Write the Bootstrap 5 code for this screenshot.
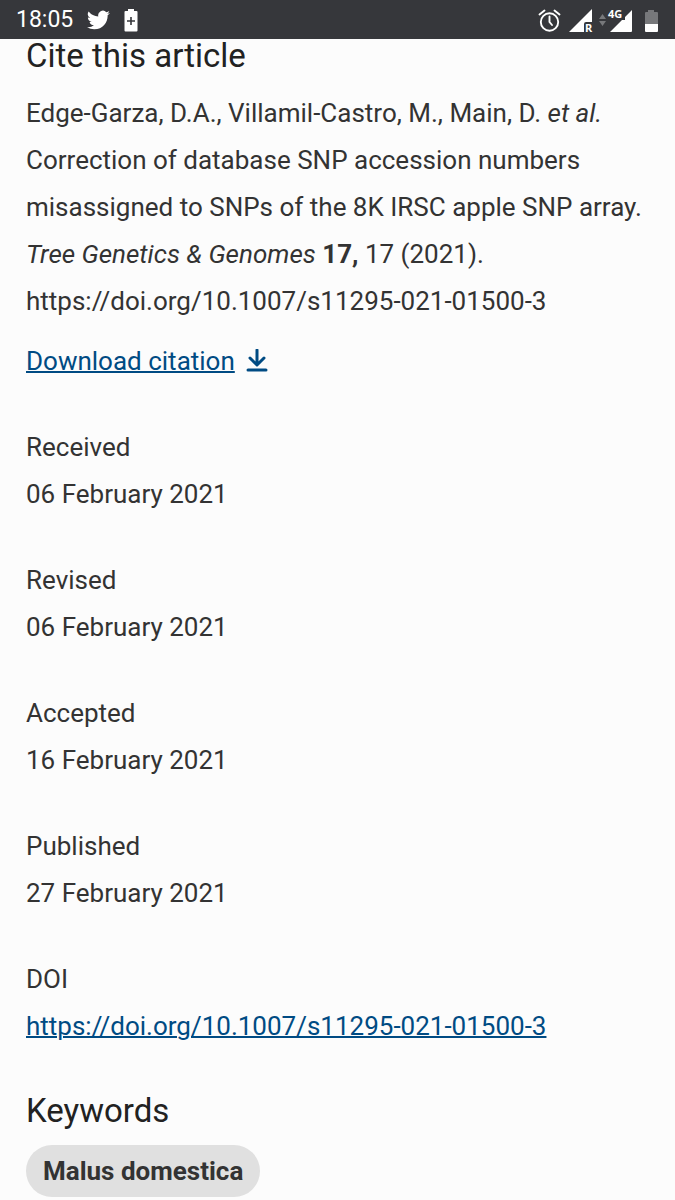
<!DOCTYPE html>
<html lang="en">
<head>
<meta charset="utf-8">
<meta name="viewport" content="width=device-width, initial-scale=1">
<title>Cite this article</title>
<link rel="stylesheet" href="https://cdn.jsdelivr.net/npm/bootstrap@5.3.0/dist/css/bootstrap.min.css">
<style>
  body { font-family: Roboto, "Liberation Sans", sans-serif; font-size: 26px; line-height: 47px; color: #333; background: #fcfcfc; }
  .status-bar { height: 39px; padding: 0 16px; background: #36373b; color: #fff; font-size: 23px; line-height: 39px; }
  .status-bar svg { display: block; }
  .status-icon { margin-left: 14px; }
  .article-info { padding: 0 24px 2px 26px; }
  .section-title { font-size: 33px; line-height: 34px; font-weight: 400; color: #222; margin-bottom: 17px; }
  .citation { margin-bottom: 13px; }
  .article-info a { color: #004b83; text-decoration-thickness: 2px; }
  .download { margin-bottom: 39px; }
  .history > div { margin-bottom: 39px; }
  .history > div:last-child { margin-bottom: 44px; }
  .history dt { font-weight: 400; }
  .keyword { padding: 0 17px; line-height: 52px; background: #e0e0e0; }
</style>
</head>
<body>
<header class="status-bar d-flex align-items-center justify-content-between">
  <div class="d-flex align-items-center">
    <span>18:05</span>
    <svg class="status-icon" width="23" height="20" viewBox="0 2 24 20" fill="#fff" role="img" aria-label="Twitter"><path d="M23.95 4.57a10 10 0 0 1-2.82.78 4.96 4.96 0 0 0 2.16-2.73c-.95.56-2 .96-3.13 1.19a4.92 4.92 0 0 0-8.38 4.48A13.93 13.93 0 0 1 1.64 3.16a4.92 4.92 0 0 0 1.52 6.57 4.9 4.9 0 0 1-2.23-.61v.06a4.92 4.92 0 0 0 3.95 4.83 5 5 0 0 1-2.21.08 4.94 4.94 0 0 0 4.6 3.42A9.87 9.87 0 0 1 0 19.54a13.99 13.99 0 0 0 7.55 2.21c9.05 0 14-7.5 14-13.98 0-.21 0-.42-.02-.63a9.94 9.94 0 0 0 2.42-2.57z"/></svg>
    <svg class="status-icon" width="14" height="24" viewBox="0 0 14 24" role="img" aria-label="Battery saver"><path fill="#fff" d="M4 1h6v2h2.500q1 0 1 1v18.500q0 1-1 1h-11q-1 0-1-1V4q0-1 1-1H4z"/><path d="M7 9v8M3 13h8" stroke="#36373b" stroke-width="1.600"/></svg>
  </div>
  <svg width="121" height="32" viewBox="0 -3 121 32" role="img" aria-label="Alarm, signal, 4G, battery">
    <g fill="none" stroke="#fff" stroke-width="1.900" stroke-linecap="round"><circle cx="11.500" cy="15" r="8.700"/><path d="M11.500 9.500V15l2.500 3M1.500 7.500l5-4M21.500 7.500l-5-4"/></g>
    <path fill="#fff" d="M54 2v13h-6q-2 0-2 2v8H31z"/>
    <text x="47" y="25" font-family="Noto Sans, sans-serif" font-weight="700" font-size="11" fill="#fff">R</text>
    <path fill="#77787b" d="M61 12l3.500-5 3.500 5zM61 14h7l-3.500 5z"/>
    <path fill="#fff" d="M94 3v21q0 1-1 1H72l12-12h3V10z"/>
    <text x="70" y="11" font-family="Noto Sans, sans-serif" font-weight="700" font-size="11" fill="#fff">4G</text>
    <path fill="#77787b" d="M110 3h6v2h3q1 0 1 1v11h-13V6q0-1 1-1h2z"/><path fill="#fff" d="M107 17h13v7q0 1-1 1h-11q-1 0-1-1z"/>
  </svg>
</header>
<main class="article-info">
  <section>
    <h2 class="section-title">Cite this article</h2>
    <p class="citation">Edge-Garza, D.A., Villamil-Castro, M., Main, D. <i>et al.</i> Correction of database SNP accession numbers misassigned to SNPs of the 8K IRSC apple SNP array. <i>Tree Genetics &amp; Genomes</i> <b>17,</b> 17 (2021). https://doi.org/10.1007/s11295-021-01500-3</p>
    <div class="download d-flex align-items-center">
      <a href="#citation">Download citation</a>
      <svg class="ms-2" width="26" height="26" viewBox="0 0 26 26" fill="none" stroke="#004b83" stroke-width="3" stroke-linecap="round" stroke-linejoin="round" aria-hidden="true"><path d="M14 1v14M7 9l7 7 7-7M5 21h18"/></svg>
    </div>
    <dl class="history mb-0">
      <div><dt>Received</dt><dd class="mb-0">06 February 2021</dd></div>
      <div><dt>Revised</dt><dd class="mb-0">06 February 2021</dd></div>
      <div><dt>Accepted</dt><dd class="mb-0">16 February 2021</dd></div>
      <div><dt>Published</dt><dd class="mb-0">27 February 2021</dd></div>
      <div><dt>DOI</dt><dd class="mb-0"><a href="https://doi.org/10.1007/s11295-021-01500-3">https://doi.org/10.1007/s11295-021-01500-3</a></dd></div>
    </dl>
  </section>
  <section>
    <h3 class="section-title">Keywords</h3>
    <ul class="list-unstyled d-flex flex-wrap mb-0"><li class="keyword rounded-pill fw-bold">Malus domestica</li></ul>
  </section>
</main>
<script src="https://cdn.jsdelivr.net/npm/bootstrap@5.3.0/dist/js/bootstrap.bundle.min.js"></script>
</body>
</html>
